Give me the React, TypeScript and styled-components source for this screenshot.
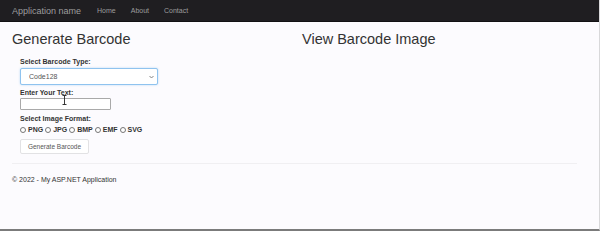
import React from 'react'
import styled, { createGlobalStyle } from 'styled-components'

const GlobalStyle = createGlobalStyle`
  html, body {
    margin: 0;
    padding: 0;
    background: #fcfbfe;
  }
  body {
    font-family: Arial, "Liberation Sans", Helvetica, sans-serif;
    color: #333;
  }
`

const Page = styled.div`
  width: 600px;
  height: 231px;
  box-sizing: border-box;
  border-bottom: 2px solid #7b7b7b;
  border-right: 1px solid #d8d8da;
  overflow: hidden;
  position: relative;
`

const Navbar = styled.nav`
  height: 22px;
  background: #1f1e21;
  border-bottom: 1px solid #121113;
  box-sizing: border-box;
  display: flex;
  align-items: center;
  padding-left: 12px;
`

const Brand = styled.a`
  font-size: 9px;
  color: #9d9d9d;
  margin-right: 16px;
  line-height: 22px;
`

const NavLinks = styled.ul`
  display: flex;
  gap: 15px;
  list-style: none;
  margin: 0;
  padding: 0;
`

const NavLink = styled.li`
  font-size: 7px;
  color: #9d9d9d;
  line-height: 22px;
`

const Container = styled.main`
  padding: 0 22px 0 12px;
`

const Row = styled.div`
  display: grid;
  grid-template-columns: 290px 1fr;
`

const Heading = styled.h2`
  margin: 9px 0 0;
  font-size: 14.5px;
  font-weight: normal;
  line-height: 17px;
  color: #333;
`

const Form = styled.form`
  display: flex;
  flex-direction: column;
  align-items: flex-start;
  padding-left: 8px;
  margin-top: 10px;
`

const Label = styled.label<{ gap?: number }>`
  font-size: 7px;
  font-weight: bold;
  line-height: 8px;
  color: #333;
  margin-bottom: ${({ gap }) => gap ?? 3}px;
`

const SelectWrap = styled.div`
  position: relative;
  margin-bottom: 4px;
`

const Select = styled.select`
  appearance: none;
  display: block;
  width: 138px;
  height: 17px;
  box-sizing: border-box;
  border: 1px solid #8fc3ef;
  border-radius: 2px;
  box-shadow: 0 0 2px rgba(102, 175, 233, 0.5);
  background: #fff;
  font-family: Arial, "Liberation Sans", sans-serif;
  font-size: 7px;
  color: #555;
  padding: 0 0 0 8px;
  margin: 0;
  outline: none;
`

const Chevron = styled.svg`
  position: absolute;
  right: 4px;
  top: 7px;
  pointer-events: none;
`

const TextInput = styled.input`
  display: block;
  width: 91px;
  height: 12px;
  box-sizing: border-box;
  border: 1px solid #a9a9a9;
  border-radius: 1px;
  background: #fff;
  margin: 0 0 5px;
  padding: 0;
`

const RadioRow = styled.div`
  display: flex;
  align-items: center;
  gap: 2px;
  margin: 3px 0 5px;
`

const RadioOption = styled.label`
  display: flex;
  align-items: center;
  gap: 2px;
  font-size: 7px;
  font-weight: bold;
  color: #333;
  line-height: 8px;
`

const Radio = styled.input`
  appearance: none;
  width: 6px;
  height: 6px;
  margin: 0;
  border: 1px solid #767676;
  border-radius: 50%;
  background: #fff;
  box-sizing: border-box;
`

const Button = styled.button`
  width: 69px;
  height: 15px;
  box-sizing: border-box;
  background: #fff;
  border: 1px solid #e2e2e4;
  border-radius: 2px;
  font-family: Arial, "Liberation Sans", sans-serif;
  font-size: 6.5px;
  color: #555;
  padding: 0;
`

const Rule = styled.hr`
  border: 0;
  border-top: 1px solid #f0eff2;
  margin: 9px 0 0;
`

const Footer = styled.footer`
  font-size: 7px;
  line-height: 8px;
  color: #333;
  margin-top: 12px;
`

const Cursor = styled.svg`
  position: absolute;
  left: 62px;
  top: 95px;
  pointer-events: none;
`

const formats = ['PNG', 'JPG', 'BMP', 'EMF', 'SVG']

export default function App() {
  return (
    <>
      <GlobalStyle />
      <Page>
        <Navbar>
          <Brand>Application name</Brand>
          <NavLinks>
            <NavLink>Home</NavLink>
            <NavLink>About</NavLink>
            <NavLink>Contact</NavLink>
          </NavLinks>
        </Navbar>
        <Container>
          <Row>
            <div>
              <Heading>Generate Barcode</Heading>
              <Form onSubmit={(e) => e.preventDefault()}>
                <Label gap={2}>Select Barcode Type:</Label>
                <SelectWrap>
                  <Select defaultValue="Code128">
                    <option>Code128</option>
                    <option>Code39</option>
                    <option>QRCode</option>
                  </Select>
                  <Chevron width="5" height="4" viewBox="0 0 5 4">
                    <path d="M0.5 1 L2.5 3 L4.5 1" fill="none" stroke="#777" strokeWidth="0.9" />
                  </Chevron>
                </SelectWrap>
                <Label gap={1}>Enter Your Text:</Label>
                <TextInput type="text" />
                <Label gap={0}>Select Image Format:</Label>
                <RadioRow>
                  {formats.map((f) => (
                    <RadioOption key={f}>
                      <Radio type="radio" name="format" value={f} />
                      {f}
                    </RadioOption>
                  ))}
                </RadioRow>
                <Button type="button">Generate Barcode</Button>
              </Form>
            </div>
            <div>
              <Heading>View Barcode Image</Heading>
            </div>
          </Row>
          <Rule />
          <Footer>© 2022 - My ASP.NET Application</Footer>
        </Container>
        <Cursor width="5" height="10" viewBox="0 0 5 10">
          <path d="M0.5 0.5 H4.5 M2.5 0.5 V9.5 M0.5 9.5 H4.5" fill="none" stroke="#222" strokeWidth="0.9" />
        </Cursor>
      </Page>
    </>
  )
}
